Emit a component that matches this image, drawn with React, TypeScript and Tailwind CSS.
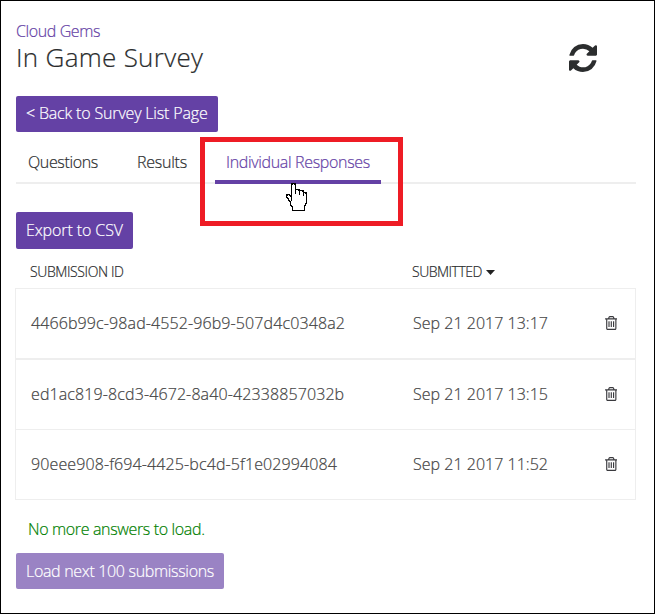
const submissions = [
  { id: "4466b99c-98ad-4552-96b9-507d4c0348a2", date: "Sep 21 2017 13:17", rule: "h-[71px] border-b-2" },
  { id: "ed1ac819-8cd3-4672-8a40-42338857032b", date: "Sep 21 2017 13:15", rule: "h-[70px] border-b" },
  { id: "90eee908-f694-4425-bc4d-5f1e02994084", date: "Sep 21 2017 11:52", rule: "h-[70px] border-b" },
];

function RefreshIcon() {
  return (
    <svg className="h-7 w-7" viewBox="0 128 1536 1536" fill="#2b2d2e">
      <path d="M1511 1056q0 5-1 7-64 268-268 434.5t-478 166.5q-146 0-282.5-55t-243.5-157l-129 129q-19 19-45 19t-45-19-19-45v-448q0-26 19-45t45-19h448q26 0 45 19t19 45-19 45l-137 137q71 66 161 102t187 36q134 0 250-65t186-179q11-17 53-117 8-23 30-23h192q13 0 22.5 9.5t9.5 22.5zm25-800v448q0 26-19 45t-45 19h-448q-26 0-45-19t-19-45 19-45l138-138q-148-137-349-137-134 0-250 65t-186 179q-11 17-53 117-8 23-30 23h-199q-13 0-22.5-9.5t-9.5-22.5v-7q65-268 270-434.5t480-166.5q146 0 284 55.5t245 156.5l130-129q19-19 45-19t45 19 19 45z" />
    </svg>
  );
}

function TrashIcon() {
  return (
    <svg className="h-[14px] w-[12.6px]" viewBox="0 128 1408 1536" preserveAspectRatio="none" fill="#3a3a3e">
      <path d="M512 736v576q0 14-9 23t-23 9h-64q-14 0-23-9t-9-23v-576q0-14 9-23t23-9h64q14 0 23 9t9 23zm256 0v576q0 14-9 23t-23 9h-64q-14 0-23-9t-9-23v-576q0-14 9-23t23-9h64q14 0 23 9t9 23zm256 0v576q0 14-9 23t-23 9h-64q-14 0-23-9t-9-23v-576q0-14 9-23t23-9h64q14 0 23 9t9 23zm128 724v-948h-896v948q0 22 7 40.5t14.5 27 10.5 8.5h832q3 0 10.5-8.5t14.5-27 7-40.5zm-672-1076h448l-48-117q-7-9-17-11h-317q-10 2-17 11zm928 32v64q0 14-9 23t-23 9h-96v948q0 83-47 143.5t-113 60.5h-832q-66 0-113-58.5t-47-141.5v-952h-96q-14 0-23-9t-9-23v-64q0-14 9-23t23-9h309l70-167q15-37 54-63t79-26h320q40 0 79 26t54 63l70 167h309q14 0 23 9t9 23z" />
    </svg>
  );
}

function HandCursor() {
  return (
    <svg className="absolute left-[285px] top-[182px] h-[30px] w-[24px]" viewBox="0 0 24 30" shapeRendering="crispEdges">
      <path
        d="M6.5 18.5V2.5L7.5 1.5H9.5L10.5 2.5V11.5V7.5H13.5L14.5 8.5V12.5V8.5H17.5L18.5 9.5V13.5V10.5H20.5L21.5 11.5V20.5L19.5 24.5V28.5H7.5V25.5L5.5 22.5V20.5L3.5 17.5L1.5 14.5V13.5L2.5 12.5H4.5L6.5 15.5Z"
        fill="#fff"
        stroke="#000"
        strokeWidth="1.5"
      />
    </svg>
  );
}

export default function App() {
  return (
    <div className="relative h-[614px] w-[655px] overflow-hidden whitespace-nowrap border border-black bg-white pl-[15px] pr-[18px] font-['Open_Sans',sans-serif] text-base font-light leading-5 text-[#2b2d2e] [-webkit-text-stroke-width:0.2px]">
      <header className="flex h-[95px] justify-between pt-[20px]">
        <div>
          <div className="tracking-[-0.4px] text-[#6441a5]">Cloud Gems</div>
          <h1 className="text-[26px] font-light leading-8 tracking-[0.3px]">In Game Survey</h1>
        </div>
        <div className="mr-[39px] mt-[23px]">
          <RefreshIcon />
        </div>
      </header>

      <button className="flex h-9 w-[202px] items-center rounded-[2px] bg-[#6441a5] pb-[2px] pl-[10px] tracking-[-0.17px] text-white">
        &lt; Back to Survey List Page
      </button>

      <nav className="relative flex h-[52px] w-[620px] border-b-2 border-[#eee] pt-[20px]">
        <span className="ml-[12px] w-[109px] tracking-[-0.37px]">Questions</span>
        <span className="w-[78px] tracking-[-0.25px]">Results</span>
        <span className="relative z-10 -mb-[2px] w-[166px] border-b-4 border-[#6441a5] pl-[11px] tracking-[-0.34px] text-[#6441a5]">
          Individual Responses
        </span>
      </nav>

      <button className="mt-[28px] flex h-[37px] w-[117px] items-center rounded-[2px] bg-[#6441a5] pb-[2px] pl-[10px] tracking-[-0.1px] text-white">
        Export to CSV
      </button>

      <div className="flex h-[39px] pt-[13px] text-sm leading-5">
        <span className="ml-[14px] w-[382px] tracking-[-0.4px]">SUBMISSION ID</span>
        <span className="tracking-[-0.5px]">SUBMITTED</span>
        <svg className="ml-[4px] mt-[8px] h-[5px] w-[9px]" viewBox="0 0 9 5">
          <path d="M0 0H9L4.5 5Z" fill="#222" />
        </svg>
      </div>

      <div className="-ml-px w-[621px] border-x border-t border-[#eee]">
        {submissions.map((s) => (
          <div key={s.id} className={`flex items-center border-[#eee] pb-[2px] pl-[15px] text-[#444] ${s.rule}`}>
            <span className="w-[382px] tracking-[0.11px]">{s.id}</span>
            <span className="w-[191.5px] tracking-[0.02px]">{s.date}</span>
            <TrashIcon />
          </div>
        ))}
      </div>

      <p className="ml-[12px] mt-[19px] tracking-[-0.35px] text-[#008000]">No more answers to load.</p>
      <button className="mt-[14px] flex h-9 w-[208px] items-center rounded-[2px] bg-[#9a83c4] pl-[10px] tracking-[-0.32px] text-white">
        Load next 100 submissions
      </button>

      <div className="absolute left-[199px] top-[136px] z-20 h-[89px] w-[203px] border-[5px] border-[#ee1c25]" />
      <div className="absolute -left-px -top-px z-30">
        <HandCursor />
      </div>
    </div>
  );
}
